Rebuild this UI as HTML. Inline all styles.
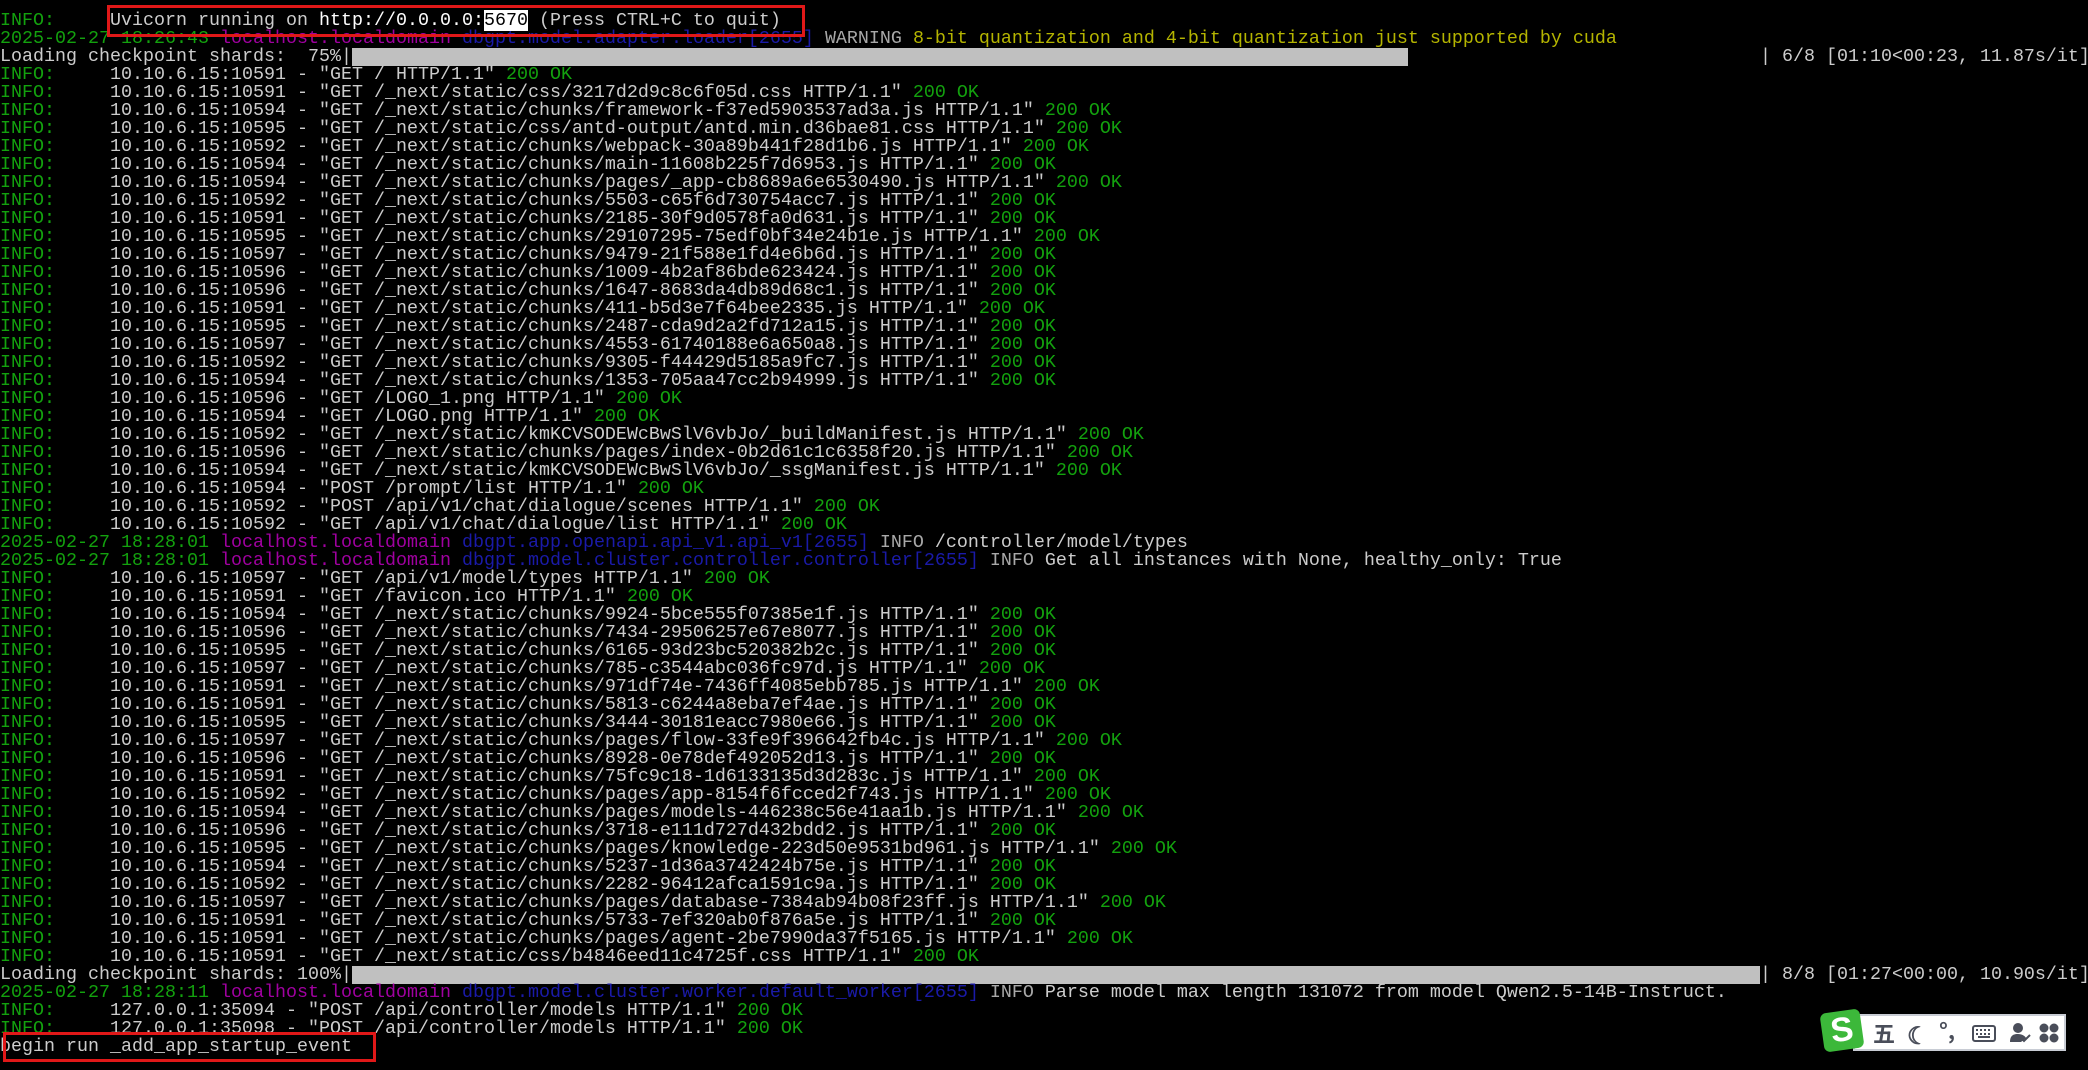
<!DOCTYPE html>
<html><head><meta charset="utf-8"><style>
html,body{margin:0;padding:0;background:#000;width:2088px;height:1070px;overflow:hidden}
pre{position:absolute;left:0;top:12px;margin:0;font-family:"Liberation Mono","DejaVu Sans Mono",monospace;font-size:18.333px;line-height:18px;color:#cccccc;white-space:pre}
.g{color:#13a10e}.m{color:#a000a0}.b{color:#1a1aa8}.y{color:#b4b400}.w{color:#a8a8a8}
.bar{display:inline-block;height:18px;vertical-align:top;width:1408px}
.hl{background:#fff;color:#000}
.box{position:absolute;border:3px solid #e01818;box-sizing:border-box}
.ime{position:absolute;left:1853px;top:1014px;width:213px;height:37px;background:#fff;border:2px solid #c8ccd4;box-sizing:border-box;font-family:"Noto Sans CJK SC",sans-serif;color:#4a4e5a;font-size:22px;font-weight:bold}
.s{position:absolute;left:1822px;top:1011px;width:40px;height:39px;background:#3cb83a;border-radius:6px;transform:rotate(-8deg);color:#fff;font:bold 34px/39px "Liberation Sans",sans-serif;text-align:center}
</style></head><body>
<pre><span class="g">INFO:</span>     Uvicorn running on <span style="color:#fff">http://0.0.0.0:</span><span class="hl">5670</span> (Press CTRL+C to quit)
<span class="g">2025-02-27 18:26:43</span> <span class="m">localhost.localdomain</span> <span class="b">dbgpt.model.adapter.loader[2655]</span> <span class="w">WARNING</span> <span class="y">8-bit quantization and 4-bit quantization just supported by cuda</span>
Loading checkpoint shards:  75%|<span class="bar" style="background:linear-gradient(90deg,#c0c0c0 0,#c0c0c0 1056px,transparent 1056px)"></span>| 6/8 [01:10&lt;00:23, 11.87s/it]
<span class="g">INFO:</span>     10.10.6.15:10591 - "GET / HTTP/1.1" <span class="g">200 OK</span>
<span class="g">INFO:</span>     10.10.6.15:10591 - "GET /_next/static/css/3217d2d9c8c6f05d.css HTTP/1.1" <span class="g">200 OK</span>
<span class="g">INFO:</span>     10.10.6.15:10594 - "GET /_next/static/chunks/framework-f37ed5903537ad3a.js HTTP/1.1" <span class="g">200 OK</span>
<span class="g">INFO:</span>     10.10.6.15:10595 - "GET /_next/static/css/antd-output/antd.min.d36bae81.css HTTP/1.1" <span class="g">200 OK</span>
<span class="g">INFO:</span>     10.10.6.15:10592 - "GET /_next/static/chunks/webpack-30a89b441f28d1b6.js HTTP/1.1" <span class="g">200 OK</span>
<span class="g">INFO:</span>     10.10.6.15:10594 - "GET /_next/static/chunks/main-11608b225f7d6953.js HTTP/1.1" <span class="g">200 OK</span>
<span class="g">INFO:</span>     10.10.6.15:10594 - "GET /_next/static/chunks/pages/_app-cb8689a6e6530490.js HTTP/1.1" <span class="g">200 OK</span>
<span class="g">INFO:</span>     10.10.6.15:10592 - "GET /_next/static/chunks/5503-c65f6d730754acc7.js HTTP/1.1" <span class="g">200 OK</span>
<span class="g">INFO:</span>     10.10.6.15:10591 - "GET /_next/static/chunks/2185-30f9d0578fa0d631.js HTTP/1.1" <span class="g">200 OK</span>
<span class="g">INFO:</span>     10.10.6.15:10595 - "GET /_next/static/chunks/29107295-75edf0bf34e24b1e.js HTTP/1.1" <span class="g">200 OK</span>
<span class="g">INFO:</span>     10.10.6.15:10597 - "GET /_next/static/chunks/9479-21f588e1fd4e6b6d.js HTTP/1.1" <span class="g">200 OK</span>
<span class="g">INFO:</span>     10.10.6.15:10596 - "GET /_next/static/chunks/1009-4b2af86bde623424.js HTTP/1.1" <span class="g">200 OK</span>
<span class="g">INFO:</span>     10.10.6.15:10596 - "GET /_next/static/chunks/1647-8683da4db89d68c1.js HTTP/1.1" <span class="g">200 OK</span>
<span class="g">INFO:</span>     10.10.6.15:10591 - "GET /_next/static/chunks/411-b5d3e7f64bee2335.js HTTP/1.1" <span class="g">200 OK</span>
<span class="g">INFO:</span>     10.10.6.15:10595 - "GET /_next/static/chunks/2487-cda9d2a2fd712a15.js HTTP/1.1" <span class="g">200 OK</span>
<span class="g">INFO:</span>     10.10.6.15:10597 - "GET /_next/static/chunks/4553-61740188e6a650a8.js HTTP/1.1" <span class="g">200 OK</span>
<span class="g">INFO:</span>     10.10.6.15:10592 - "GET /_next/static/chunks/9305-f44429d5185a9fc7.js HTTP/1.1" <span class="g">200 OK</span>
<span class="g">INFO:</span>     10.10.6.15:10594 - "GET /_next/static/chunks/1353-705aa47cc2b94999.js HTTP/1.1" <span class="g">200 OK</span>
<span class="g">INFO:</span>     10.10.6.15:10596 - "GET /LOGO_1.png HTTP/1.1" <span class="g">200 OK</span>
<span class="g">INFO:</span>     10.10.6.15:10594 - "GET /LOGO.png HTTP/1.1" <span class="g">200 OK</span>
<span class="g">INFO:</span>     10.10.6.15:10592 - "GET /_next/static/kmKCVSODEWcBwSlV6vbJo/_buildManifest.js HTTP/1.1" <span class="g">200 OK</span>
<span class="g">INFO:</span>     10.10.6.15:10596 - "GET /_next/static/chunks/pages/index-0b2d61c1c6358f20.js HTTP/1.1" <span class="g">200 OK</span>
<span class="g">INFO:</span>     10.10.6.15:10594 - "GET /_next/static/kmKCVSODEWcBwSlV6vbJo/_ssgManifest.js HTTP/1.1" <span class="g">200 OK</span>
<span class="g">INFO:</span>     10.10.6.15:10594 - "POST /prompt/list HTTP/1.1" <span class="g">200 OK</span>
<span class="g">INFO:</span>     10.10.6.15:10592 - "POST /api/v1/chat/dialogue/scenes HTTP/1.1" <span class="g">200 OK</span>
<span class="g">INFO:</span>     10.10.6.15:10592 - "GET /api/v1/chat/dialogue/list HTTP/1.1" <span class="g">200 OK</span>
<span class="g">2025-02-27 18:28:01</span> <span class="m">localhost.localdomain</span> <span class="b">dbgpt.app.openapi.api_v1.api_v1[2655]</span> <span class="w">INFO</span> /controller/model/types
<span class="g">2025-02-27 18:28:01</span> <span class="m">localhost.localdomain</span> <span class="b">dbgpt.model.cluster.controller.controller[2655]</span> <span class="w">INFO</span> Get all instances with None, healthy_only: True
<span class="g">INFO:</span>     10.10.6.15:10597 - "GET /api/v1/model/types HTTP/1.1" <span class="g">200 OK</span>
<span class="g">INFO:</span>     10.10.6.15:10591 - "GET /favicon.ico HTTP/1.1" <span class="g">200 OK</span>
<span class="g">INFO:</span>     10.10.6.15:10594 - "GET /_next/static/chunks/9924-5bce555f07385e1f.js HTTP/1.1" <span class="g">200 OK</span>
<span class="g">INFO:</span>     10.10.6.15:10596 - "GET /_next/static/chunks/7434-29506257e67e8077.js HTTP/1.1" <span class="g">200 OK</span>
<span class="g">INFO:</span>     10.10.6.15:10595 - "GET /_next/static/chunks/6165-93d23bc520382b2c.js HTTP/1.1" <span class="g">200 OK</span>
<span class="g">INFO:</span>     10.10.6.15:10597 - "GET /_next/static/chunks/785-c3544abc036fc97d.js HTTP/1.1" <span class="g">200 OK</span>
<span class="g">INFO:</span>     10.10.6.15:10591 - "GET /_next/static/chunks/971df74e-7436ff4085ebb785.js HTTP/1.1" <span class="g">200 OK</span>
<span class="g">INFO:</span>     10.10.6.15:10591 - "GET /_next/static/chunks/5813-c6244a8eba7ef4ae.js HTTP/1.1" <span class="g">200 OK</span>
<span class="g">INFO:</span>     10.10.6.15:10595 - "GET /_next/static/chunks/3444-30181eacc7980e66.js HTTP/1.1" <span class="g">200 OK</span>
<span class="g">INFO:</span>     10.10.6.15:10597 - "GET /_next/static/chunks/pages/flow-33fe9f396642fb4c.js HTTP/1.1" <span class="g">200 OK</span>
<span class="g">INFO:</span>     10.10.6.15:10596 - "GET /_next/static/chunks/8928-0e78def492052d13.js HTTP/1.1" <span class="g">200 OK</span>
<span class="g">INFO:</span>     10.10.6.15:10591 - "GET /_next/static/chunks/75fc9c18-1d6133135d3d283c.js HTTP/1.1" <span class="g">200 OK</span>
<span class="g">INFO:</span>     10.10.6.15:10592 - "GET /_next/static/chunks/pages/app-8154f6fcced2f743.js HTTP/1.1" <span class="g">200 OK</span>
<span class="g">INFO:</span>     10.10.6.15:10594 - "GET /_next/static/chunks/pages/models-446238c56e41aa1b.js HTTP/1.1" <span class="g">200 OK</span>
<span class="g">INFO:</span>     10.10.6.15:10596 - "GET /_next/static/chunks/3718-e111d727d432bdd2.js HTTP/1.1" <span class="g">200 OK</span>
<span class="g">INFO:</span>     10.10.6.15:10595 - "GET /_next/static/chunks/pages/knowledge-223d50e9531bd961.js HTTP/1.1" <span class="g">200 OK</span>
<span class="g">INFO:</span>     10.10.6.15:10594 - "GET /_next/static/chunks/5237-1d36a3742424b75e.js HTTP/1.1" <span class="g">200 OK</span>
<span class="g">INFO:</span>     10.10.6.15:10592 - "GET /_next/static/chunks/2282-96412afca1591c9a.js HTTP/1.1" <span class="g">200 OK</span>
<span class="g">INFO:</span>     10.10.6.15:10597 - "GET /_next/static/chunks/pages/database-7384ab94b08f23ff.js HTTP/1.1" <span class="g">200 OK</span>
<span class="g">INFO:</span>     10.10.6.15:10591 - "GET /_next/static/chunks/5733-7ef320ab0f876a5e.js HTTP/1.1" <span class="g">200 OK</span>
<span class="g">INFO:</span>     10.10.6.15:10591 - "GET /_next/static/chunks/pages/agent-2be7990da37f5165.js HTTP/1.1" <span class="g">200 OK</span>
<span class="g">INFO:</span>     10.10.6.15:10591 - "GET /_next/static/css/b4846eed11c4725f.css HTTP/1.1" <span class="g">200 OK</span>
Loading checkpoint shards: 100%|<span class="bar" style="background:#c0c0c0"></span>| 8/8 [01:27&lt;00:00, 10.90s/it]
<span class="g">2025-02-27 18:28:11</span> <span class="m">localhost.localdomain</span> <span class="b">dbgpt.model.cluster.worker.default_worker[2655]</span> <span class="w">INFO</span> Parse model max length 131072 from model Qwen2.5-14B-Instruct.
<span class="g">INFO:</span>     127.0.0.1:35094 - "POST /api/controller/models HTTP/1.1" <span class="g">200 OK</span>
<span class="g">INFO:</span>     127.0.0.1:35098 - "POST /api/controller/models HTTP/1.1" <span class="g">200 OK</span>
begin run _add_app_startup_event</pre>
<div class="box" style="left:107px;top:5px;width:698px;height:32px"></div>
<div class="box" style="left:3px;top:1032px;width:373px;height:30px"></div>
<div class="ime">
<span style="position:absolute;left:18px;top:1px">五</span>
<span style="position:absolute;left:52px;top:0px;font-size:24px">☾</span>
<span style="position:absolute;left:84px;top:-2px">°,</span>
<svg style="position:absolute;left:117px;top:9px" width="24" height="17" viewBox="0 0 24 17"><rect x="1" y="1" width="22" height="15" rx="2" fill="none" stroke="#4a4e5a" stroke-width="2"/><path d="M4 5h2M8 5h2M12 5h2M16 5h2M4 9h2M8 9h2M12 9h2M16 9h2M6 12h12" stroke="#4a4e5a" stroke-width="2"/></svg>
<svg style="position:absolute;left:154px;top:6px" width="22" height="22" viewBox="0 0 22 22"><circle cx="9" cy="6" r="5" fill="#4a4e5a"/><path d="M1 20c0-7 4-8 8-8s7 2 8 4l-5 4z" fill="#4a4e5a"/><path d="M12 16l3 3 6-6" fill="none" stroke="#4a4e5a" stroke-width="2"/></svg>
<svg style="position:absolute;left:184px;top:7px" width="20" height="20" viewBox="0 0 20 20"><circle cx="5" cy="5" r="4.5" fill="#4a4e5a"/><circle cx="15" cy="5" r="4.5" fill="#4a4e5a"/><circle cx="5" cy="15" r="4.5" fill="#4a4e5a"/><circle cx="15" cy="15" r="4.5" fill="#4a4e5a"/></svg>
</div>
<div class="s">S</div>
</body></html>
